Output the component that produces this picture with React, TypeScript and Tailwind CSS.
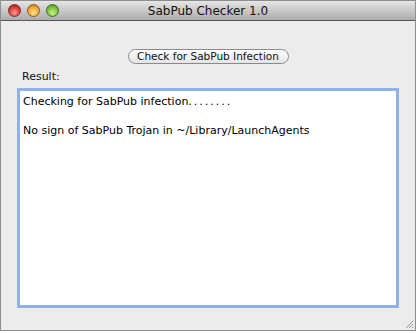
export default function App() {
  return (
    <div className="w-[418px] h-[333px] bg-white" style={{ fontFamily: '"DejaVu Sans", sans-serif' }}>
      <div className="w-[416px] h-[331px] flex flex-col border border-[#8e8e8e] bg-[#ececec]">
        {/* title bar */}
        <div className="relative h-[20px] shrink-0 flex items-center justify-center border-b border-[#575757] bg-gradient-to-b from-[#e6e6e6] to-[#acacac]">
          <div className="absolute left-[7px] top-[3px] flex gap-[6px]">
            <span className="w-[13px] h-[13px] rounded-full border border-[#7a2a2a] bg-[radial-gradient(circle_at_50%_70%,#ff9a90,#d8372e_60%,#9e1b14)]" />
            <span className="w-[13px] h-[13px] rounded-full border border-[#8a5a14] bg-[radial-gradient(circle_at_50%_70%,#ffe08a,#f2a233_60%,#b8660e)]" />
            <span className="w-[13px] h-[13px] rounded-full border border-[#3f6e1c] bg-[radial-gradient(circle_at_50%_70%,#c8f08a,#74bd3a_60%,#3f8a1a)]" />
          </div>
          <span className="text-[12px] text-[#111] leading-none">SabPub Checker 1.0</span>
        </div>

        {/* body */}
        <div className="flex-1 flex flex-col px-[16px] pb-[22px] relative">
          <div className="flex justify-center pt-[28px]">
            <button className="w-[161px] h-[15px] rounded-full border border-[#8a8a8a] bg-gradient-to-b from-white to-[#e4e4e4] text-[10.5px] leading-none text-[#111]">
              Check for SabPub Infection
            </button>
          </div>
          <div className="text-[11px] text-[#111] leading-none mt-[7px] ml-[5px]">Result:</div>
          <div className="mt-[6px] flex-1 border-[3px] border-[#8db2e3] bg-white px-[3px] pt-[4px] text-[11px] leading-[14.5px] text-black">
            <div>
              Checking for SabPub infection<span className="tracking-[2px]">........</span>
            </div>
            <div>&nbsp;</div>
            <div>No sign of SabPub Trojan in ~/Library/LaunchAgents</div>
          </div>
          <svg className="absolute right-[1px] bottom-[1px]" width="11" height="11" viewBox="0 0 11 11">
            <path d="M10 3 L3 10 M10 6 L6 10 M10 9 L9 10" stroke="#9a9a9a" strokeWidth="1" />
          </svg>
        </div>
      </div>
    </div>
  );
}
